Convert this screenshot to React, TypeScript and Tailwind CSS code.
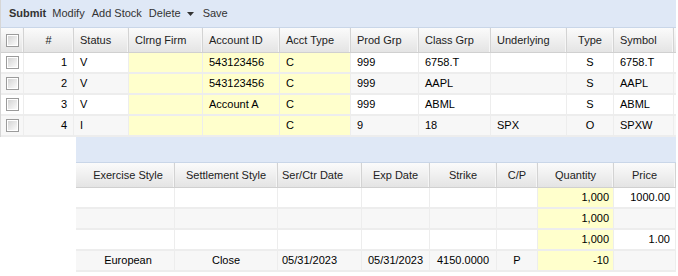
import React from "react";

type Col = { w: string; label?: string; hAlign?: string; dAlign?: string; yellow?: boolean; check?: boolean; filler?: boolean };

const topCols: Col[] = [
  { w: "w-[23px]", check: true },
  { w: "w-[50px]", label: "#", hAlign: "justify-center", dAlign: "justify-end pr-[6px]" },
  { w: "w-[55px]", label: "Status" },
  { w: "w-[74px]", label: "Clrng Firm", yellow: true },
  { w: "w-[77px]", label: "Account ID", yellow: true },
  { w: "w-[71px]", label: "Acct Type", yellow: true },
  { w: "w-[68px]", label: "Prod Grp" },
  { w: "w-[72px]", label: "Class Grp" },
  { w: "w-[76px]", label: "Underlying" },
  { w: "w-[47px]", label: "Type", hAlign: "justify-center", dAlign: "justify-center" },
  { w: "w-[60px]", label: "Symbol" },
  { w: "w-[3px]", filler: true },
];

const topRows = [
  ["", "1", "V", "", "543123456", "C", "999", "6758.T", "", "S", "6758.T", ""],
  ["", "2", "V", "", "543123456", "C", "999", "AAPL", "", "S", "AAPL", ""],
  ["", "3", "V", "", "Account A", "C", "999", "ABML", "", "S", "ABML", ""],
  ["", "4", "I", "", "", "C", "9", "18", "SPX", "O", "SPXW", ""],
];

const C = "justify-center";
const botCols: Col[] = [
  { w: "w-[3px]", filler: true },
  { w: "w-[93px]", label: "Exercise Style", hAlign: C, dAlign: C },
  { w: "w-[103px]", label: "Settlement Style", hAlign: C, dAlign: C },
  { w: "w-[84px]", label: "Ser/Ctr Date", hAlign: "pl-[4px]", dAlign: "pl-[4px]" },
  { w: "w-[68px]", label: "Exp Date", hAlign: C, dAlign: C },
  { w: "w-[67px]", label: "Strike", hAlign: C, dAlign: C },
  { w: "w-[41px]", label: "C/P", hAlign: C, dAlign: C },
  { w: "w-[76px]", label: "Quantity", hAlign: C, dAlign: "justify-end pr-[4px]", yellow: true },
  { w: "w-[62px]", label: "Price", hAlign: C, dAlign: "justify-end pr-[5px]" },
  { w: "w-[3px]", filler: true },
];

const botRows = [
  ["", "", "", "", "", "", "", "1,000", "1000.00", ""],
  ["", "", "", "", "", "", "", "1,000", "", ""],
  ["", "", "", "", "", "", "", "1,000", "1.00", ""],
  ["", "European", "Close", "05/31/2023", "05/31/2023", "4150.0000", "P", "-10", "", ""],
];

function CheckBox() {
  return (
    <span className="block w-[13px] h-[13px] border border-[#9b9b9b] bg-white p-[1px]">
      <span className="block w-full h-full bg-linear-to-br from-[#d4d4d4] to-[#fbfbfb]" />
    </span>
  );
}

function HeaderRow({ cols }: { cols: Col[] }) {
  return (
    <div className="flex h-[25px] bg-linear-to-b from-[#fbfbfb] to-[#e4e4e4] border-b border-[#d0d0d0] text-[#222]">
      {cols.map((c, i) => (
        <div
          key={i}
          className={`${c.w} shrink-0 h-full flex items-center ${c.filler ? "" : "border-r border-[#d3d3d3] shadow-[inset_-1px_0_0_#f6f6f6]"} ${c.check ? "justify-center" : c.hAlign ?? "pl-[6px]"} whitespace-nowrap overflow-hidden`}
        >
          {c.check ? <CheckBox /> : c.label}
        </div>
      ))}
    </div>
  );
}

function DataRows({ cols, rows }: { cols: Col[]; rows: string[][] }) {
  return (
    <>
      {rows.map((r, ri) => (
        <div key={ri} className={`flex h-[21px] border-b-2 border-[#ededed] ${ri % 2 === 1 ? "bg-[#f7f7f7]" : "bg-white"}`}>
          {cols.map((c, ci) => (
            <div
              key={ci}
              className={`${c.w} shrink-0 h-full flex items-center whitespace-nowrap overflow-hidden ${c.filler ? "" : "border-r border-[#ededed]"} ${c.yellow ? "bg-[#ffffcc]" : ""} ${c.check ? "justify-center" : c.dAlign ?? "pl-[6px]"}`}
            >
              {c.check ? <CheckBox /> : r[ci]}
            </div>
          ))}
        </div>
      ))}
    </>
  );
}

export default function App() {
  return (
    <div className="w-[678px] h-[276px] bg-white text-[11px] text-black font-['Liberation_Sans',Arial,sans-serif] overflow-hidden">
      <div className="w-[676px] border-l border-[#d6d6d6]">
        <div className="h-[28px] bg-[#dfe8f6] border-b border-[#c9d6e8] flex items-center pl-[8px] text-[#333] text-[11px]">
          <span className="font-bold">Submit</span>
          <span className="ml-[6px]">Modify</span>
          <span className="ml-[7px]">Add Stock</span>
          <span className="ml-[7px]">Delete</span>
          <svg className="ml-[6px]" width="7" height="4" viewBox="0 0 7 4">
            <path d="M0 0h7L3.5 4z" fill="#333" />
          </svg>
          <span className="ml-[9px]">Save</span>
        </div>
        <HeaderRow cols={topCols} />
        <DataRows cols={topCols} rows={topRows} />
      </div>
      <div className="ml-[76px] w-[600px]">
        <div className="h-[26px] bg-[#dfe8f6] border-b border-[#c9d6e8]" />
        <HeaderRow cols={botCols} />
        <DataRows cols={botCols} rows={botRows} />
      </div>
    </div>
  );
}
